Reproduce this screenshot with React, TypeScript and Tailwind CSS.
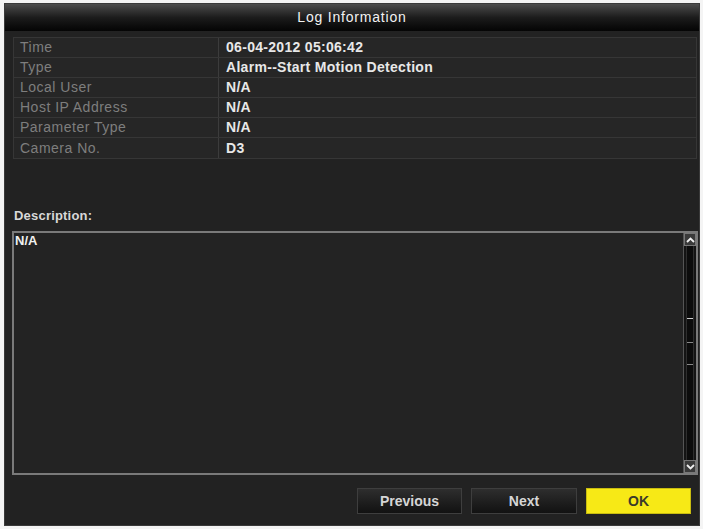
const rows = [
  { label: "Time", value: "06-04-2012 05:06:42" },
  { label: "Type", value: "Alarm--Start Motion Detection" },
  { label: "Local User", value: "N/A" },
  { label: "Host IP Address", value: "N/A" },
  { label: "Parameter Type", value: "N/A" },
  { label: "Camera No.", value: "D3" },
];

function Arrow({ up }: { up?: boolean }) {
  return (
    <svg width="9" height="6" viewBox="0 0 9 6">
      <path
        d={up ? "M1 5 L4.5 1.5 L8 5" : "M1 1 L4.5 4.5 L8 1"}
        stroke="#f0f0f0"
        strokeWidth="1.8"
        fill="none"
      />
    </svg>
  );
}

export default function App() {
  return (
    <div className="w-[703px] h-[529px] bg-[#f4f4f4] pt-[3px] pl-[4px] font-['Liberation_Sans',Arial,sans-serif]">
      <div className="w-[696px] h-[523px] bg-[#222222] border border-[#3a3a3a] flex flex-col">
        {/* title bar */}
        <div className="h-[27px] flex items-center justify-center bg-gradient-to-b from-[#4d4d4d] via-[#1c1c1c] to-[#050505] text-[14px] tracking-[0.8px] text-[#f2f2f2]">
          Log Information
        </div>

        {/* info table */}
        <div className="mt-[6px] ml-[8px] w-[684px] border border-[#363636]">
          {rows.map((r) => (
            <div key={r.label} className="flex h-[20px] border-b border-[#363636] last:border-b-0">
              <div className="w-[205px] shrink-0 border-r border-[#3c3c3c] bg-[#262626] pl-[6px] flex items-center text-[14px] tracking-[0.5px] text-[#7e7e7e]">
                {r.label}
              </div>
              <div className="flex-1 bg-[#262626] pl-[7px] flex items-center text-[14px] tracking-[0.3px] font-bold text-[#e8e8e8]">
                {r.value}
              </div>
            </div>
          ))}
        </div>

        {/* description */}
        <div className="mt-[50px] ml-[9px] text-[13px] font-bold tracking-[0.2px] text-[#d8d8d8] leading-none">Description:</div>
        <div className="mt-[9px] ml-[7px] w-[686px] h-[244px] border-2 border-[#7a7a7a] bg-[#232323] flex">
          <div className="flex-1 pl-[1px] pt-[1px] text-[13px] font-bold text-[#f0f0f0] leading-none">N/A</div>
          <div className="w-[13px] flex flex-col border-l border-[#555] bg-[#141414]">
            <div className="h-[13px] flex items-center justify-center bg-[#3a3a3a] border border-[#777]">
              <Arrow up />
            </div>
            <div className="flex-1 flex flex-col items-center mx-[2px] pt-[72px] bg-[#0c0c0c] border-x border-[#2e2e2e]">
              <div className="w-[6px] h-[1px] bg-[#cfcfcf]" />
              <div className="w-[6px] h-[1px] mt-[23px] bg-[#888]" />
              <div className="w-[6px] h-[1px] mt-[21px] bg-[#888]" />
            </div>
            <div className="h-[13px] flex items-center justify-center bg-[#3a3a3a] border border-[#777]">
              <Arrow />
            </div>
          </div>
        </div>

        {/* buttons */}
        <div className="flex-1 flex items-center justify-end gap-[9px] pr-[8px] pt-[2px]">
          <button className="w-[105px] h-[26px] bg-gradient-to-b from-[#2e2e2e] to-[#121212] border border-[#3e3e3e] text-[14px] font-bold text-[#d6d6d6]">
            Previous
          </button>
          <button className="w-[106px] h-[26px] bg-gradient-to-b from-[#2e2e2e] to-[#121212] border border-[#3e3e3e] text-[14px] font-bold text-[#d6d6d6]">
            Next
          </button>
          <button className="w-[105px] h-[26px] bg-[#f7e916] border border-[#c8bc10] text-[14px] font-bold text-[#3a3a2a]">
            OK
          </button>
        </div>
      </div>
    </div>
  );
}
